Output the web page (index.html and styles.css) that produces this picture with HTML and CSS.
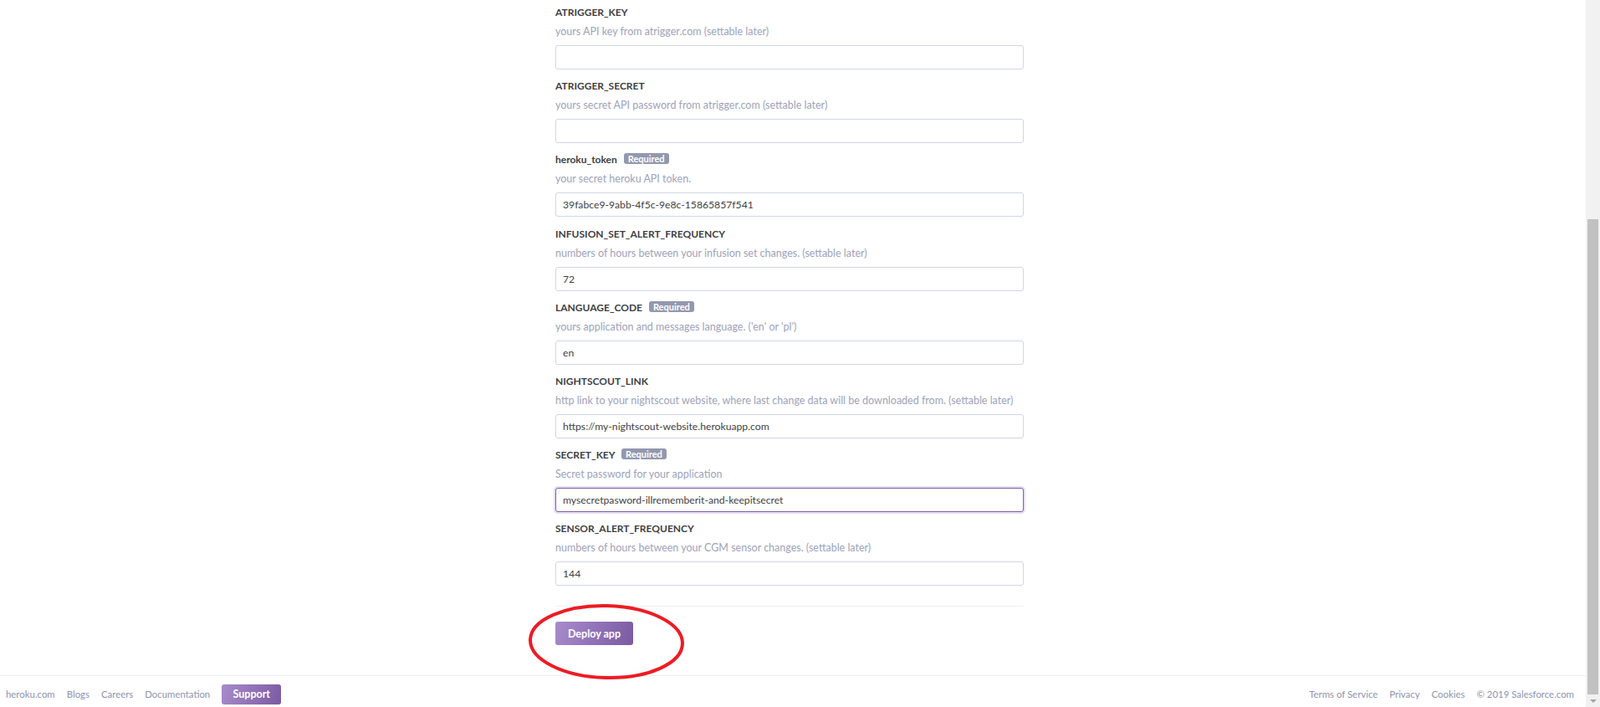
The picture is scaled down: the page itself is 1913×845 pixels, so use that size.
FILE: index.html
```html
<!DOCTYPE html>
<html lang="en">
<head>
<meta charset="utf-8">
<title>Create a new app</title>
<link rel="stylesheet" href="styles.css">
</head>
<body>
<div class="page">
  <div class="main">
    <div class="content">
      <div class="column">
        <div class="field">
          <div class="label">ATRIGGER_KEY</div>
          <div class="desc">yours API key from atrigger.com (settable later)</div>
          <input class="input" type="text" value="">
        </div>
        <div class="field">
          <div class="label">ATRIGGER_SECRET</div>
          <div class="desc">yours secret API password from atrigger.com (settable later)</div>
          <input class="input" type="text" value="">
        </div>
        <div class="field">
          <div class="label">heroku_token <span class="badge">Required</span></div>
          <div class="desc">your secret heroku API token.</div>
          <input class="input" type="text" value="39fabce9-9abb-4f5c-9e8c-15865857f541">
        </div>
        <div class="field">
          <div class="label">INFUSION_SET_ALERT_FREQUENCY</div>
          <div class="desc">numbers of hours between your infusion set changes. (settable later)</div>
          <input class="input" type="text" value="72">
        </div>
        <div class="field">
          <div class="label">LANGUAGE_CODE <span class="badge">Required</span></div>
          <div class="desc">yours application and messages language. ('en' or 'pl')</div>
          <input class="input" type="text" value="en">
        </div>
        <div class="field">
          <div class="label">NIGHTSCOUT_LINK</div>
          <div class="desc">http link to your nightscout website, where last change data will be downloaded from. (settable later)</div>
          <input class="input" type="text" value="https://my-nightscout-website.herokuapp.com">
        </div>
        <div class="field">
          <div class="label">SECRET_KEY <span class="badge">Required</span></div>
          <div class="desc">Secret password for your application</div>
          <input class="input input-focus" type="text" value="mysecretpasword-illrememberit-and-keepitsecret">
        </div>
        <div class="field">
          <div class="label">SENSOR_ALERT_FREQUENCY</div>
          <div class="desc">numbers of hours between your CGM sensor changes. (settable later)</div>
          <input class="input" type="text" value="144">
        </div>
        <div class="separator"></div>
        <div class="actions">
          <button class="btn-deploy" type="button">Deploy app</button>
          <svg class="annotation" width="200" height="100" viewBox="0 0 200 100" aria-hidden="true">
            <ellipse cx="100" cy="50" rx="91" ry="43" fill="none" stroke="#ed1c24" stroke-width="4"/>
          </svg>
        </div>
      </div>
    </div>
    <footer class="footer">
      <nav class="footer-left">
        <a class="flink" href="#">heroku.com</a>
        <a class="flink" href="#">Blogs</a>
        <a class="flink" href="#">Careers</a>
        <a class="flink" href="#">Documentation</a>
        <a class="btn-support" href="#">Support</a>
      </nav>
      <nav class="footer-right">
        <a class="flink" href="#">Terms of Service</a>
        <a class="flink" href="#">Privacy</a>
        <a class="flink" href="#">Cookies</a>
        <span class="flink">© 2019 Salesforce.com</span>
      </nav>
    </footer>
  </div>
  <div class="scrollbar">
    <div class="scroll-track"><div class="scroll-thumb"></div></div>
    <div class="scroll-arrow"></div>
  </div>
</div>
</body>
</html>
```

FILE: styles.css
```css
* { box-sizing: border-box; }
html, body { margin: 0; padding: 0; background: #fff; }
body {
  font-family: Lato, "Open Sans", "Liberation Sans", sans-serif;
  font-size: 13px;
  color: #3f3f44;
  overflow: hidden;
}
.page {
  display: flex;
  height: 845px;
  width: 1913px;
}
.main {
  flex: 1;
  display: flex;
  flex-direction: column;
  min-width: 0;
}
.content {
  flex: 1;
  padding-top: 4px;
  padding-right: 8px;
}
.column {
  width: 560px;
  margin: 0 auto;
}
.field {
  padding-top: 1px;
  margin-bottom: 9.2px;
}
.label {
  font-weight: 700;
  font-size: 12px;
  line-height: 20px;
  height: 20px;
  color: #3f3f44;
  white-space: nowrap;
}
.badge {
  display: inline-block;
  margin-left: 5px;
  padding: 0 5px;
  height: 13px;
  line-height: 13px;
  font-size: 11px;
  font-weight: 700;
  color: #fff;
  background: #929892;
  background: #9298ae;
  border-radius: 3px;
  vertical-align: 1px;
}
.desc {
  margin-top: 3px;
  font-size: 12.5px;
  line-height: 20px;
  height: 20px;
  color: #9ea3b9;
  white-space: nowrap;
}
.input {
  display: block;
  margin-top: 6px;
  width: 560px;
  height: 29px;
  padding: 0 8px;
  border: 1px solid #cfd7e6;
  border-radius: 3px;
  font-family: inherit;
  font-size: 12.2px;
  color: #3f3f44;
  background: #fff;
  outline: none;
}
.input-focus {
  border-color: #7d61a3;
  box-shadow: 0 0 0 2px #e7def2;
}
.separator {
  margin-top: 24px;
  height: 1px;
  background: #eef0f4;
  width: 560px;
}
.actions {
  position: relative;
  padding-top: 18px;
}
.btn-deploy {
  display: block;
  width: 93px;
  height: 28px;
  padding: 0;
  border: 0;
  border-radius: 3px;
  background: linear-gradient(110deg, #a78ccb 0%, #9475bb 45%, #7a5aa0 100%);
  color: #fff;
  font-family: inherit;
  font-size: 12.5px;
  font-weight: 700;
  cursor: pointer;
}
.annotation {
  position: absolute;
  left: -39px;
  top: -8px;
  transform: rotate(1.5deg);
}
.footer {
  height: 38px;
  border-top: 1px solid #eeeff3;
  display: flex;
  justify-content: space-between;
  align-items: center;
  padding: 6px 14px 0 7px;
}
.footer-left, .footer-right {
  display: flex;
  align-items: center;
  gap: 14px;
}
.flink {
  font-size: 11.4px;
  color: #8e94ae;
  text-decoration: none;
  white-space: nowrap;
}
.btn-support {
  display: flex;
  align-items: center;
  justify-content: center;
  width: 71px;
  height: 24px;
  border-radius: 3px;
  background: linear-gradient(110deg, #a78ccb 0%, #9475bb 45%, #7a5aa0 100%);
  color: #fff;
  font-size: 12.5px;
  font-weight: 700;
  text-decoration: none;
}
.scrollbar {
  width: 17px;
  height: 845px;
  background: #f1f1f1;
  display: flex;
  flex-direction: column;
}
.scroll-track {
  flex: 1;
  padding: 262px 2px 0 2px;
}
.scroll-thumb {
  height: 568px;
  background: #c1c1c1;
}
.scroll-arrow {
  height: 15px;
  display: flex;
  justify-content: center;
  align-items: center;
}
.scroll-arrow::before {
  content: "";
  width: 0;
  height: 0;
  border-left: 4px solid transparent;
  border-right: 4px solid transparent;
  border-top: 4px solid #a3a3a3;
}
```
